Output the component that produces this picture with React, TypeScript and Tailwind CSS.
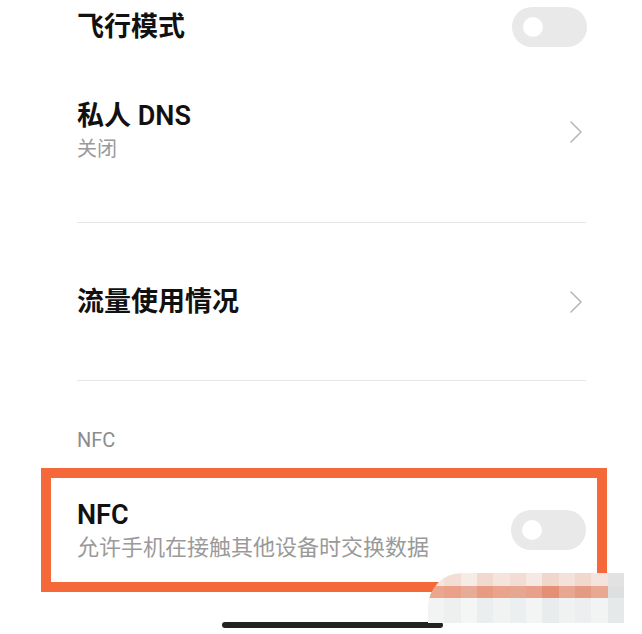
import React from 'react';

const font = 'font-["Roboto","Noto_Sans_CJK_SC",sans-serif]';

function Toggle() {
  return (
    <div className="w-[75px] h-[40px] rounded-full bg-[#e9e9e9] flex items-center pl-[11px] shrink-0">
      <div className="w-[20px] h-[20px] rounded-full bg-white" />
    </div>
  );
}

function Chevron() {
  return (
    <svg width="14" height="24" viewBox="0 0 14 24" className="shrink-0 mr-[2px]">
      <polyline points="2,2 12,12 2,22" fill="none" stroke="#b8b8b8" strokeWidth="1.6" strokeLinejoin="round" strokeLinecap="round" />
    </svg>
  );
}

const mosaicTop = ['bg-[#f6e6df]', 'bg-[#f3ddd4]', 'bg-[#f7ebe6]', 'bg-[#f1d9cf]', 'bg-[#f5e3dc]', 'bg-[#f2dcd3]', 'bg-[#f6e8e2]', 'bg-[#f0d6cb]', 'bg-[#f4e1d9]', 'bg-[#f1d8ce]', 'bg-[#f5e4dd]', 'bg-[#e3e2e2]'];
const mosaicMid = ['bg-[#eca58e]', 'bg-[#eaa089]', 'bg-[#e8ab97]', 'bg-[#e99b82]', 'bg-[#eba38c]', 'bg-[#e6a792]', 'bg-[#e8a08a]', 'bg-[#e58f75]', 'bg-[#e9a690]', 'bg-[#e59a84]', 'bg-[#eaa791]', 'bg-[#dedfe0]'];
const mosaicLow = ['bg-[#f2f3f3]', 'bg-[#eef0f0]', 'bg-[#f4f5f5]', 'bg-[#ebeeee]', 'bg-[#f1f2f2]', 'bg-[#eceff0]', 'bg-[#f3f4f4]', 'bg-[#e9eced]', 'bg-[#f0f2f2]', 'bg-[#eceeef]', 'bg-[#f2f3f3]', 'bg-[#e6e9ea]'];

function Mosaic() {
  return (
    <div className="absolute left-[428px] top-[573px] w-[196px] h-[50px] rounded-tl-[34px] overflow-hidden flex flex-col">
      <div className="flex h-[13px]">
        {mosaicTop.map((c, i) => <div key={i} className={`flex-1 ${c}`} />)}
      </div>
      <div className="flex h-[12px]">
        {mosaicMid.map((c, i) => <div key={i} className={`flex-1 ${c}`} />)}
      </div>
      <div className="flex flex-1">
        {mosaicLow.map((c, i) => <div key={i} className={`flex-1 ${c}`} />)}
      </div>
    </div>
  );
}

export default function App() {
  return (
    <div className={`relative w-[642px] h-[634px] bg-white overflow-hidden ${font}`}>
      {/* 飞行模式 */}
      <div className="h-[54px] flex items-center justify-between pl-[77px] pr-[55px]">
        <span className="text-[27px] leading-[36px] font-semibold text-[#111]">飞行模式</span>
        <Toggle />
      </div>

      {/* 私人 DNS */}
      <div className="flex items-center justify-between pl-[77px] pr-[57px] pt-[44px] pb-[57px]">
        <div className="flex flex-col">
          <span className="text-[27px] leading-[36px] font-semibold text-[#111]">私人 DNS</span>
          <span className="text-[20px] leading-[31px] text-[#9a9a9a]">关闭</span>
        </div>
        <Chevron />
      </div>

      <div className="ml-[77px] mr-[56px] h-px bg-[#e6e6e6]" />

      {/* 流量使用情况 */}
      <div className="h-[157px] flex items-center justify-between pl-[77px] pr-[57px]">
        <span className="text-[27px] leading-[36px] font-semibold text-[#111]">流量使用情况</span>
        <Chevron />
      </div>

      <div className="ml-[77px] mr-[56px] h-px bg-[#e6e6e6]" />

      <div className="pl-[77px] pt-[47px] text-[20px] leading-[24px] text-[#8c8c8c]">NFC</div>

      {/* NFC highlighted */}
      <div className="mt-[16px] ml-[41px] w-[566px] h-[124px] border-[10px] border-[#f5683a] flex items-center justify-between pl-[26px] pr-[11px]">
        <div className="flex flex-col">
          <span className="text-[27px] leading-[34px] font-semibold text-[#111]">NFC</span>
          <span className="text-[22px] leading-[31px] text-[#9a9a9a]">允许手机在接触其他设备时交换数据</span>
        </div>
        <Toggle />
      </div>

      <div className="mt-[30px] ml-[222px] w-[221px] h-[6px] rounded-full bg-[#222]" />

      <Mosaic />
    </div>
  );
}
